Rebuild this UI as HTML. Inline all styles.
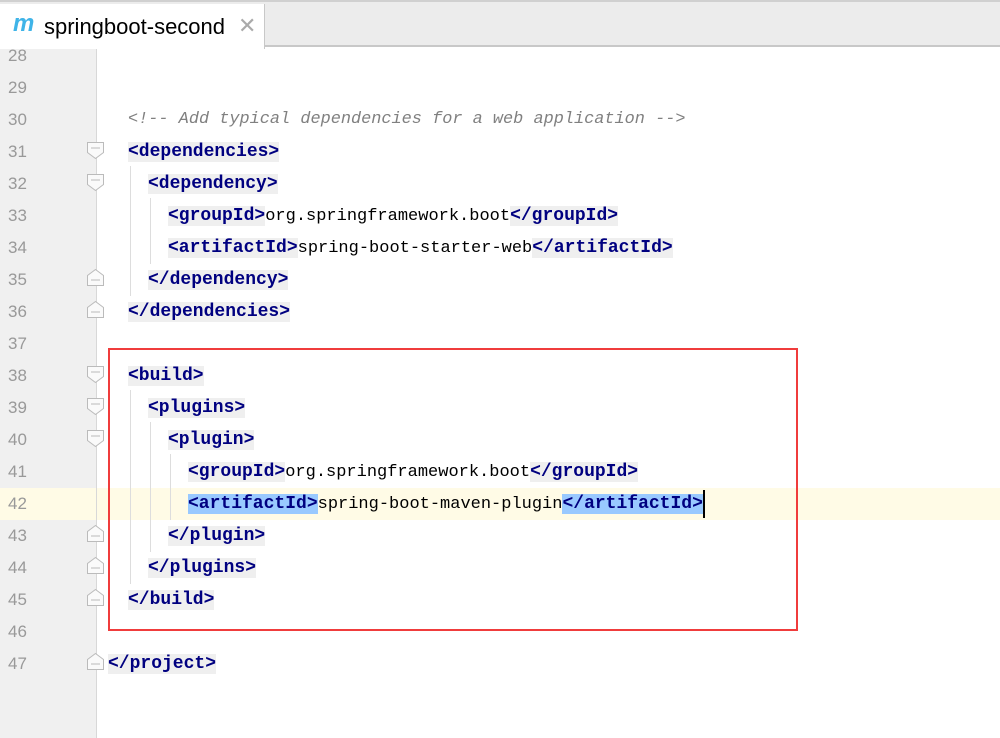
<!DOCTYPE html>
<html><head><meta charset="utf-8"><style>
body{margin:0;width:1000px;height:738px;overflow:hidden;background:#fff;position:relative;font-family:"Liberation Mono",monospace}
.tabbar{position:absolute;left:0;top:0;width:1000px;height:47px;background:#ececec;border-bottom:2px solid #c8c8c8;border-top:2px solid #d0d0d0;box-sizing:border-box}
.tab{position:absolute;left:0;top:2px;width:264px;height:45px;background:#fff;border-right:1px solid #c8c8c8}
.tab .m{position:absolute;left:13px;top:6px;font:italic bold 24px "Liberation Sans",sans-serif;color:#3fb4e8}
.tab .t{position:absolute;left:44px;top:10px;font:22px "Liberation Sans",sans-serif;color:#000}
.tab .x{position:absolute;left:238px;top:9px;font:22px "Liberation Sans",sans-serif;color:#aaa}
.gutter{position:absolute;left:0;top:47px;width:96px;height:691px;background:#f0f0f0;border-right:1px solid #d8d8d8}
.ln{position:absolute;left:8px;width:40px;font:17px "Liberation Sans",sans-serif;color:#999;line-height:32px}
.l{position:absolute;height:32px;line-height:32px;font-size:17px;white-space:pre;color:#000}
.tg{color:#000080;font-weight:bold;background:#efefef;font-size:18px}
.c{color:#808080;font-style:italic;font-size:16.9px}
.sel{background:#99c9ff}
.g{position:absolute;width:1px;background:#ddd}
</style></head><body>
<div style="position:absolute;left:0;top:488px;width:1000px;height:32px;background:#fffbe6"></div>
<div class="gutter"></div>
<div style="position:absolute;left:0;top:488px;width:96px;height:32px;background:#fffbe6"></div>
<div class="ln" style="top:40px">28</div><div class="ln" style="top:72px">29</div><div class="ln" style="top:104px">30</div><div class="ln" style="top:136px">31</div><div class="ln" style="top:168px">32</div><div class="ln" style="top:200px">33</div><div class="ln" style="top:232px">34</div><div class="ln" style="top:264px">35</div><div class="ln" style="top:296px">36</div><div class="ln" style="top:328px">37</div><div class="ln" style="top:360px">38</div><div class="ln" style="top:392px">39</div><div class="ln" style="top:424px">40</div><div class="ln" style="top:456px">41</div><div class="ln" style="top:488px">42</div><div class="ln" style="top:520px">43</div><div class="ln" style="top:552px">44</div><div class="ln" style="top:584px">45</div><div class="ln" style="top:616px">46</div><div class="ln" style="top:648px">47</div>
<svg style="position:absolute;left:0;top:0" width="110" height="738" fill="#fafafa" stroke="#bbb" stroke-width="1">
<path d="M87.5 142.5h16v10l-8 6l-8-6z"/><path d="M91 148h9"/>
<path d="M87.5 174.5h16v10l-8 6l-8-6z"/><path d="M91 180h9"/>
<path d="M87.5 366.5h16v10l-8 6l-8-6z"/><path d="M91 372h9"/>
<path d="M87.5 398.5h16v10l-8 6l-8-6z"/><path d="M91 404h9"/>
<path d="M87.5 430.5h16v10l-8 6l-8-6z"/><path d="M91 436h9"/>
<path d="M87.5 285.5h16v-10l-8-6l-8 6z"/><path d="M91 280h9"/>
<path d="M87.5 317.5h16v-10l-8-6l-8 6z"/><path d="M91 312h9"/>
<path d="M87.5 541.5h16v-10l-8-6l-8 6z"/><path d="M91 536h9"/>
<path d="M87.5 573.5h16v-10l-8-6l-8 6z"/><path d="M91 568h9"/>
<path d="M87.5 605.5h16v-10l-8-6l-8 6z"/><path d="M91 600h9"/>
<path d="M87.5 669.5h16v-10l-8-6l-8 6z"/><path d="M91 664h9"/>
</svg>
<div class="g" style="left:130px;top:166px;height:130px"></div>
<div class="g" style="left:150px;top:198px;height:66px"></div>
<div class="g" style="left:130px;top:390px;height:194px"></div>
<div class="g" style="left:150px;top:422px;height:130px"></div>
<div class="g" style="left:170px;top:454px;height:66px"></div>
<div class="l c" style="left:128px;top:104px">&lt;!-- Add typical dependencies for a web application --&gt;</div>
<div class="l" style="left:128px;top:136px"><span class="tg">&lt;dependencies&gt;</span></div>
<div class="l" style="left:148px;top:168px"><span class="tg">&lt;dependency&gt;</span></div>
<div class="l" style="left:168px;top:200px"><span class="tg">&lt;groupId&gt;</span>org.springframework.boot<span class="tg">&lt;/groupId&gt;</span></div>
<div class="l" style="left:168px;top:232px"><span class="tg">&lt;artifactId&gt;</span>spring-boot-starter-web<span class="tg">&lt;/artifactId&gt;</span></div>
<div class="l" style="left:148px;top:264px"><span class="tg">&lt;/dependency&gt;</span></div>
<div class="l" style="left:128px;top:296px"><span class="tg">&lt;/dependencies&gt;</span></div>
<div class="l" style="left:128px;top:360px"><span class="tg">&lt;build&gt;</span></div>
<div class="l" style="left:148px;top:392px"><span class="tg">&lt;plugins&gt;</span></div>
<div class="l" style="left:168px;top:424px"><span class="tg">&lt;plugin&gt;</span></div>
<div class="l" style="left:188px;top:456px"><span class="tg">&lt;groupId&gt;</span>org.springframework.boot<span class="tg">&lt;/groupId&gt;</span></div>
<div class="l" style="left:188px;top:488px"><span class="tg sel">&lt;artifactId&gt;</span>spring-boot-maven-plugin<span class="tg sel">&lt;/artifactId&gt;</span></div>
<div style="position:absolute;left:703px;top:490px;width:2px;height:28px;background:#000"></div>
<div class="l" style="left:168px;top:520px"><span class="tg">&lt;/plugin&gt;</span></div>
<div class="l" style="left:148px;top:552px"><span class="tg">&lt;/plugins&gt;</span></div>
<div class="l" style="left:128px;top:584px"><span class="tg">&lt;/build&gt;</span></div>
<div class="l" style="left:108px;top:648px"><span class="tg">&lt;/project&gt;</span></div>
<div style="position:absolute;left:108px;top:348px;width:686px;height:279px;border:2px solid #f03c3c"></div>
<div class="tabbar"><div class="tab"><span class="m">m</span><span class="t">springboot-second</span><span class="x">✕</span></div></div>
</body></html>
